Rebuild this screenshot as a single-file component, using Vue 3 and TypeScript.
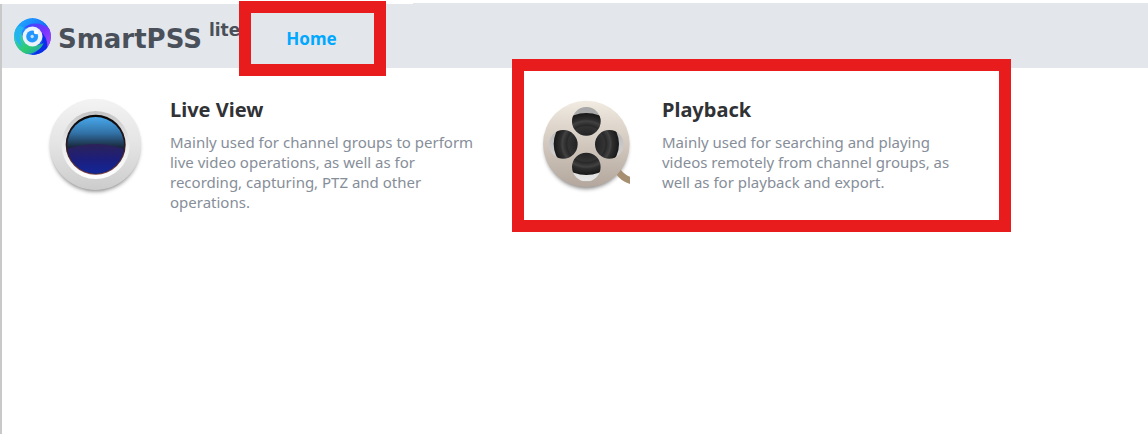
<script setup lang="ts">
interface Feature {
  id: 'live' | 'playback'
  title: string
  text: string
  marked: boolean
}

const features: Feature[] = [
  {
    id: 'live',
    title: 'Live View',
    text: 'Mainly used for channel groups to perform live video operations, as well as for recording, capturing, PTZ and other operations.',
    marked: false,
  },
  {
    id: 'playback',
    title: 'Playback',
    text: 'Mainly used for searching and playing videos remotely from channel groups, as well as for playback and export.',
    marked: true,
  },
]
</script>

<template>
  <div class="app">
    <header class="bar">
      <div class="brand">
        <svg class="logo" viewBox="0 0 112 112" aria-hidden="true">
          <defs>
            <linearGradient id="lgBase" x1="0" y1="0" x2="1" y2="1">
              <stop offset="0" stop-color="#22b4ff" />
              <stop offset="0.4" stop-color="#1a80ff" />
              <stop offset="1" stop-color="#0f35e0" />
            </linearGradient>
            <linearGradient id="lgPurple" x1="0" y1="0" x2="1" y2="1">
              <stop offset="0" stop-color="#2a50ff" />
              <stop offset="0.5" stop-color="#7433ff" />
              <stop offset="1" stop-color="#b050f5" />
            </linearGradient>
            <linearGradient id="lgGreen" x1="0" y1="0" x2="1" y2="1">
              <stop offset="0" stop-color="#35c8e8" />
              <stop offset="0.6" stop-color="#2ccb70" />
              <stop offset="1" stop-color="#1f98c8" />
            </linearGradient>
            <clipPath id="lgClip"><circle cx="56" cy="56" r="56" /></clipPath>
          </defs>
          <g clip-path="url(#lgClip)">
            <circle cx="56" cy="56" r="56" fill="url(#lgBase)" />
            <path d="M28 34C44 12 78 10 112 34V84L96 96C94 66 82 44 62 32C48 26 36 28 28 34Z" fill="url(#lgPurple)" />
            <path d="M84 44C92 66 84 92 56 112H84L101 92C102 70 96 56 84 44Z" fill="#0a2fe8" />
            <path d="M0 30V84L30 110C54 110 78 102 90 76C66 90 40 84 28 62C22 50 20 40 26 30C14 44 4 40 0 30Z" fill="url(#lgGreen)" />
            <path d="M4 30C-2 54 6 74 24 86C16 66 16 46 30 30C22 22 12 22 4 30Z" fill="#22b4ee" />
          </g>
          <circle cx="56" cy="56" r="30" fill="#eaf2fc" />
          <circle cx="55" cy="56" r="18" fill="#2196ff" />
          <circle cx="55" cy="56" r="5" fill="#c4e2ff" />
          <circle cx="67" cy="42" r="7" fill="#ffffff" />
        </svg>
        <span class="name">SmartPSS</span>
        <span class="edition">lite</span>
      </div>
      <nav class="tabs">
        <a class="tab" href="#home">Home</a>
      </nav>
    </header>

    <main class="features">
      <a v-for="f in features" :key="f.id" class="card" :class="{ marked: f.marked }" :href="'#' + f.id">
        <svg v-if="f.id === 'live'" class="icon" viewBox="0 0 330 330" aria-hidden="true">
          <defs>
            <linearGradient id="lvRing" x1="0" y1="0" x2="0" y2="1">
              <stop offset="0" stop-color="#f3f3f3" />
              <stop offset="0.5" stop-color="#e4e4e4" />
              <stop offset="1" stop-color="#cccccc" />
            </linearGradient>
            <linearGradient id="lvRim" x1="0" y1="0" x2="0" y2="1">
              <stop offset="0" stop-color="#c4c4c4" />
              <stop offset="0.5" stop-color="#ebebeb" />
              <stop offset="1" stop-color="#ffffff" />
            </linearGradient>
            <linearGradient id="lvEdge" x1="0" y1="0" x2="0" y2="1">
              <stop offset="0" stop-color="#080808" />
              <stop offset="0.5" stop-color="#2a1a24" />
              <stop offset="1" stop-color="#7a4048" />
            </linearGradient>
            <linearGradient id="lvSky" x1="0" y1="0" x2="0" y2="1">
              <stop offset="0" stop-color="#48a8ec" />
              <stop offset="0.28" stop-color="#3273a8" />
              <stop offset="0.56" stop-color="#151d2c" />
            </linearGradient>
            <linearGradient id="lvDeep" x1="0" y1="0" x2="0" y2="1">
              <stop offset="0" stop-color="#2c2258" />
              <stop offset="0.5" stop-color="#1c1e7c" />
              <stop offset="1" stop-color="#12289c" />
            </linearGradient>
            <clipPath id="lvClip"><circle cx="167" cy="166" r="85" /></clipPath>
            <filter id="lvShadow" x="-20%" y="-20%" width="140%" height="140%">
              <feGaussianBlur stdDeviation="7" />
            </filter>
          </defs>
          <circle cx="166" cy="172" r="132" fill="#000" opacity="0.5" filter="url(#lvShadow)" />
          <circle cx="166" cy="163" r="137" fill="url(#lvRing)" />
          <circle cx="167" cy="165" r="102" fill="url(#lvRim)" />
          <circle cx="167" cy="164" r="90" fill="url(#lvEdge)" />
          <g clip-path="url(#lvClip)">
            <rect x="80" y="80" width="174" height="174" fill="url(#lvSky)" />
            <path d="M78 178Q167 146 256 178V256H78Z" fill="url(#lvDeep)" />
          </g>
        </svg>
        <svg v-else class="icon" viewBox="0 0 330 330" aria-hidden="true">
          <defs>
            <linearGradient id="pbDisc" x1="0" y1="0" x2="0" y2="1">
              <stop offset="0" stop-color="#f1ebe1" />
              <stop offset="0.5" stop-color="#d2c8be" />
              <stop offset="1" stop-color="#b3a79d" />
            </linearGradient>
            <linearGradient id="pbHole" x1="0" y1="0" x2="0" y2="1">
              <stop offset="0" stop-color="#a5a5a5" />
              <stop offset="1" stop-color="#e8e8e8" />
            </linearGradient>
            <radialGradient id="pbFilm">
              <stop offset="0.3" stop-color="#242424" />
              <stop offset="0.56" stop-color="#333333" />
              <stop offset="0.6" stop-color="#282828" />
              <stop offset="0.74" stop-color="#424242" />
              <stop offset="0.8" stop-color="#2e2e2e" />
              <stop offset="1" stop-color="#181818" />
            </radialGradient>
            <clipPath id="pbHoles">
              <circle cx="163" cy="94" r="43" />
              <circle cx="163" cy="231" r="43" />
              <circle cx="94" cy="163" r="43" />
              <circle cx="232" cy="163" r="43" />
            </clipPath>
            <filter id="pbShadow" x="-20%" y="-20%" width="140%" height="140%">
              <feGaussianBlur stdDeviation="7" />
            </filter>
          </defs>
          <circle cx="163" cy="172" r="124" fill="#000" opacity="0.5" filter="url(#pbShadow)" />
          <path d="M264 237Q280 256 294 260V282Q268 275 252 252Z" fill="#a78f72" />
          <circle cx="163" cy="162" r="130" fill="url(#pbDisc)" />
          <g clip-path="url(#pbHoles)">
            <rect x="50" y="48" width="226" height="228" fill="url(#pbHole)" />
            <ellipse cx="163" cy="162" rx="98" ry="93" fill="url(#pbFilm)" />
          </g>
        </svg>
        <div class="info">
          <h2 class="title">{{ f.title }}</h2>
          <p class="text">{{ f.text }}</p>
        </div>
      </a>
    </main>
  </div>
</template>

<style>
body {
  margin: 0;
  background: #fff;
}
</style>

<style scoped>
.app {
  box-sizing: border-box;
  min-height: calc(100vh - 4px);
  margin-top: 4px;
  border-left: 2px solid #c9c9c9;
  background: #fff;
  font-family: "Noto Sans", "Open Sans", sans-serif;
}

.bar {
  position: relative;
  display: flex;
  height: 64px;
  background: #e3e6eb;
}

.bar::before {
  content: "";
  position: absolute;
  top: -1px;
  right: 0;
  left: 411px;
  height: 1px;
  background: #e3e6eb;
}

.brand {
  display: flex;
  align-items: center;
  padding-left: 12px;
  color: #4a505a;
  font-family: "DejaVu Sans", Verdana, sans-serif;
  font-weight: 700;
}

.logo {
  width: 37px;
  height: 37px;
}

.name {
  margin-left: 7px;
  padding-top: 6px;
  font-size: 26px;
  line-height: 32px;
}

.edition {
  align-self: flex-start;
  margin-left: 7px;
  padding-top: 16px;
  font-size: 17px;
  line-height: 20px;
}

.tabs {
  position: relative;
  display: flex;
  align-items: center;
  margin-left: 8px;
  padding: 0 38px;
}

.tabs::after {
  content: "";
  position: absolute;
  inset: -3px -11px -8px -9px;
  border: 12px solid #e81c1c;
  pointer-events: none;
}

.tab {
  padding-top: 6px;
  color: #00a8ff;
  font-size: 17px;
  font-weight: 700;
  line-height: 24px;
  text-decoration: none;
}

.features {
  display: grid;
  grid-template-columns: repeat(auto-fill, minmax(0, 492px));
  padding: 22px 0 0 38px;
}

.card {
  position: relative;
  display: flex;
  align-items: flex-start;
  color: inherit;
  text-decoration: none;
}

.marked::after {
  content: "";
  position: absolute;
  inset: -31px 13px -20px -20px;
  border: 12px solid #e81c1c;
  pointer-events: none;
}

.icon {
  flex: none;
  width: 110px;
  height: 110px;
}

.info {
  max-width: 312px;
  padding-left: 20px;
  padding-top: 8px;
}

.title {
  margin: 0;
  color: #303236;
  font-size: 20px;
  font-weight: 700;
  line-height: 24px;
}

.text {
  margin: 10px 0 0;
  color: #868e99;
  font-size: 15px;
  line-height: 20px;
}
</style>
